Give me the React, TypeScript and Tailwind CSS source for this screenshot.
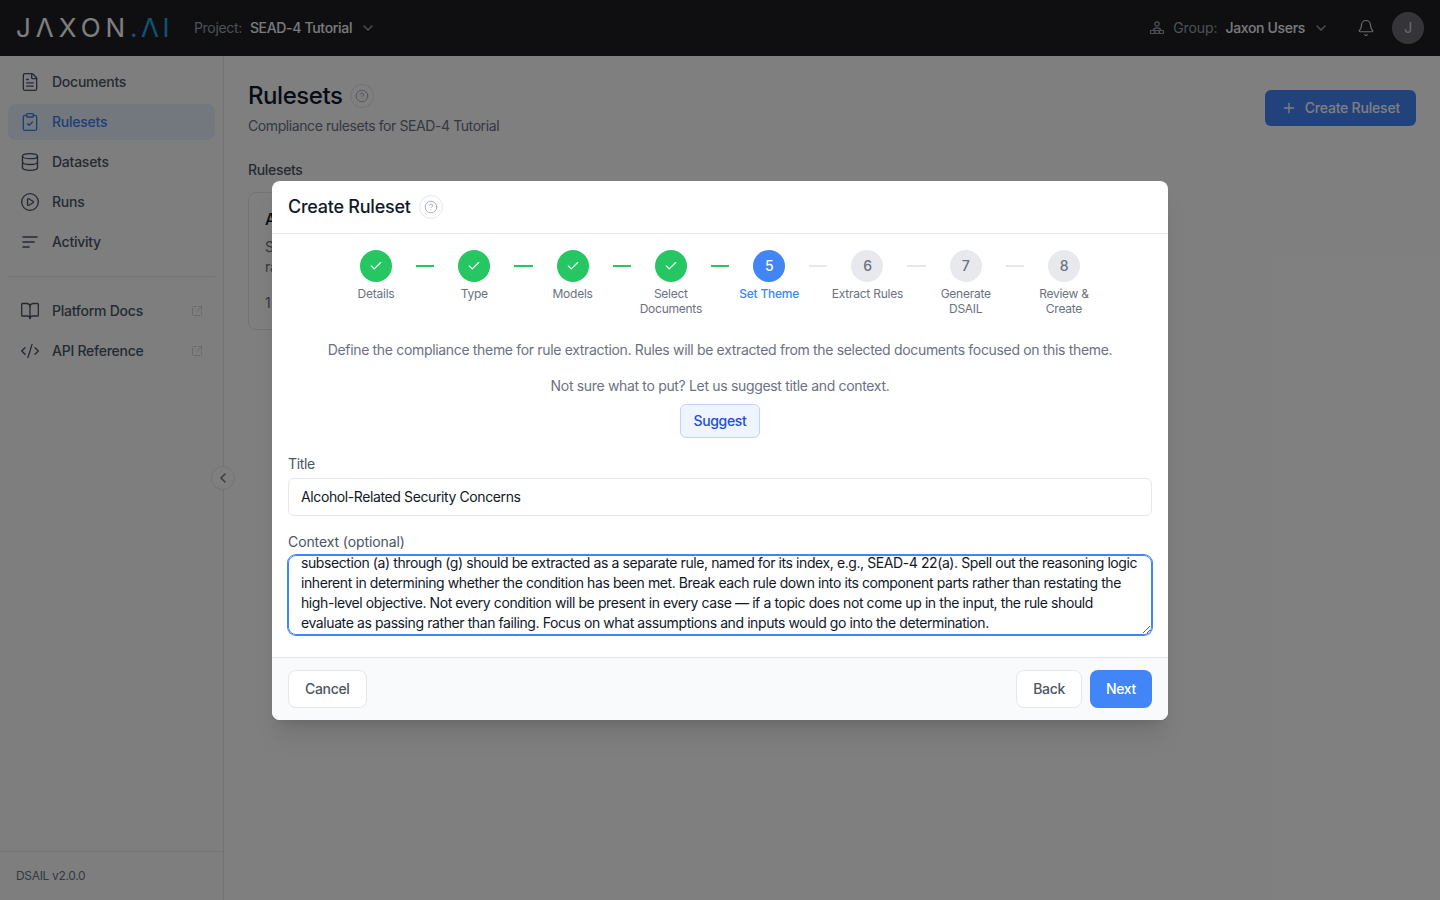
import { useEffect, useRef } from "react";
import {
  Bell,
  BookOpen,
  Check,
  ChevronDown,
  ChevronLeft,
  CircleHelp,
  CirclePlay,
  ClipboardCheck,
  CodeXml,
  Database,
  FileText,
  Plus,
  SquareArrowOutUpRight,
} from "lucide-react";

const contextText =
  "Focus on Guideline G of SEAD-4, covering the conditions that could raise a security concern about alcohol consumption. Each\nsubsection (a) through (g) should be extracted as a separate rule, named for its index, e.g., SEAD-4 22(a). Spell out the reasoning logic inherent in determining whether the condition has been met. Break each rule down into its component parts rather than restating the high-level objective. Not every condition will be present in every case — if a topic does not come up in the input, the rule should evaluate as passing rather than failing. Focus on what assumptions and inputs would go into the determination.";

const steps = [
  { n: 1, label: "Details" },
  { n: 2, label: "Type" },
  { n: 3, label: "Models" },
  { n: 4, label: "Select Documents" },
  { n: 5, label: "Set Theme" },
  { n: 6, label: "Extract Rules" },
  { n: 7, label: "Generate DSAIL" },
  { n: 8, label: "Review & Create" },
];
const currentStep = 5;

function ActivityIcon() {
  return (
    <svg width="20" height="20" viewBox="0 0 20 20" fill="none" stroke="currentColor" strokeWidth="1.6" strokeLinecap="round">
      <path d="M3 5h14M3 10h11M3 15h6" />
    </svg>
  );
}

function GroupIcon() {
  return (
    <svg width="16" height="16" viewBox="0 0 16 16" fill="none" stroke="currentColor" strokeWidth="1.2">
      <circle cx="8" cy="4" r="2.2" />
      <path d="M4.5 10c0-1.4 1.5-2.2 3.5-2.2s3.5.8 3.5 2.2" />
      <rect x="1.5" y="10.5" width="4" height="3" rx="0.8" />
      <rect x="6" y="10.5" width="4" height="3" rx="0.8" />
      <rect x="10.5" y="10.5" width="4" height="3" rx="0.8" />
    </svg>
  );
}

function HelpBadge() {
  return (
    <span className="flex h-6 w-6 items-center justify-center rounded-full border border-gray-200 text-gray-400">
      <CircleHelp size={14} strokeWidth={1.4} />
    </span>
  );
}

function NavItem({ icon, label, active, external }: { icon: React.ReactNode; label: string; active?: boolean; external?: boolean }) {
  return (
    <div className={`flex h-9 items-center gap-3 rounded-lg px-3 text-sm font-medium tracking-[-0.25px] ${active ? "bg-[#e7f0ff] text-[#3f7de8]" : "text-gray-600"}`}>
      {icon}
      <span className="flex-1">{label}</span>
      {external && <SquareArrowOutUpRight size={12} className="text-gray-300" />}
    </div>
  );
}

function Stepper() {
  return (
    <div className="mx-auto flex w-[768px] items-start">
      {steps.map((s, i) => {
        const done = s.n < currentStep;
        const current = s.n === currentStep;
        return (
          <div key={s.n} className="contents">
            <div className="flex w-20 shrink-0 flex-col items-center">
              <div
                className={`flex h-8 w-8 items-center justify-center rounded-full text-sm font-medium ${
                  done ? "bg-[#26c762] text-white" : current ? "bg-[#4285f6] text-white" : "bg-[#e8e9ed] text-gray-500"
                }`}
              >
                {done ? <Check size={14} strokeWidth={2} /> : s.n}
              </div>
              <span className={`mt-1 text-center text-xs leading-[15px] tracking-[-0.25px] ${current ? "font-medium text-[#4285f6]" : "text-gray-500"}`}>{s.label}</span>
            </div>
            {i < steps.length - 1 && <div className={`mt-[15px] h-0.5 flex-1 ${done ? "bg-[#26c762]" : "bg-[#e5e7eb]"}`} />}
          </div>
        );
      })}
    </div>
  );
}

export default function App() {
  const contextRef = useRef<HTMLTextAreaElement>(null);

  useEffect(() => {
    // the reference shows the end of the context, scrolled
    const el = contextRef.current;
    if (el) el.scrollTop = el.scrollHeight - el.clientHeight - 7;
  }, []);

  return (
    <div className="relative flex h-[900px] flex-col overflow-hidden bg-white font-[Inter,sans-serif] tracking-[-0.33px]">
      <header className="flex h-14 shrink-0 items-center bg-[#1f1f24] pl-4 pr-4 text-white">
        <div className="flex w-[178px] items-baseline text-[26px] font-normal leading-none tracking-normal">
          <span className="tracking-[5px]">JΛXON</span>
          <span className="tracking-[3.5px] text-[#22a7e0]">.ΛI</span>
        </div>
        <span className="text-sm text-gray-400">Project:</span>
        <span className="ml-2 text-sm font-medium text-gray-100">SEAD-4 Tutorial</span>
        <ChevronDown size={16} className="ml-2 text-gray-400" />
        <div className="ml-auto flex items-center text-sm">
          <span className="text-gray-400">
            <GroupIcon />
          </span>
          <span className="ml-2 tracking-[-0.1px] text-gray-400">Group:</span>
          <span className="ml-2 font-medium text-gray-100">Jaxon Users</span>
          <ChevronDown size={16} className="ml-2 text-gray-400" />
          <Bell size={18} strokeWidth={1.6} className="ml-[28px] text-gray-300" />
          <span className="ml-[17px] flex h-8 w-8 items-center justify-center rounded-full bg-[#6b6b72] text-sm text-gray-300">J</span>
        </div>
      </header>

      <div className="flex min-h-0 flex-1">
        <aside className="relative flex w-56 shrink-0 flex-col border-r border-gray-200 bg-[#fdfdfd]">
          <nav className="flex flex-col gap-1 px-2 pt-2">
            <NavItem icon={<FileText size={20} strokeWidth={1.6} />} label="Documents" />
            <NavItem icon={<ClipboardCheck size={20} strokeWidth={1.6} />} label="Rulesets" active />
            <NavItem icon={<Database size={20} strokeWidth={1.6} />} label="Datasets" />
            <NavItem icon={<CirclePlay size={20} strokeWidth={1.6} />} label="Runs" />
            <NavItem icon={<ActivityIcon />} label="Activity" />
          </nav>
          <div className="mx-2 mt-4 border-t border-gray-200" />
          <div className="mt-4 flex flex-col gap-1 px-2">
            <NavItem icon={<BookOpen size={20} strokeWidth={1.6} />} label="Platform Docs" external />
            <NavItem icon={<CodeXml size={20} strokeWidth={1.6} />} label="API Reference" external />
          </div>
          <div className="mt-auto flex h-[49px] items-center border-t border-gray-200 px-4 text-xs text-gray-500">DSAIL v2.0.0</div>
          <span className="absolute -right-3 top-[410px] flex h-6 w-6 items-center justify-center rounded-full border border-gray-200 bg-white text-gray-500">
            <ChevronLeft size={16} strokeWidth={2.2} />
          </span>
        </aside>

        <main className="min-w-0 flex-1 px-6 pt-6">
          <div className="flex items-start justify-between">
            <div>
              <div className="flex items-center gap-2">
                <h1 className="text-2xl font-medium tracking-[-0.45px] text-gray-900">Rulesets</h1>
                <HelpBadge />
              </div>
              <p className="mt-1 text-sm tracking-[-0.41px] text-gray-500">Compliance rulesets for SEAD-4 Tutorial</p>
            </div>
            <button className="mt-2.5 flex h-9 items-center gap-2 rounded-md bg-[#4285f6] px-4 text-sm font-medium tracking-[-0.2px] text-white">
              <Plus size={16} />
              Create Ruleset
            </button>
          </div>
          <h2 className="mt-6 text-sm font-medium text-gray-600">Rulesets</h2>
          <div className="mt-3 h-[138px] w-[400px] rounded-lg border border-gray-200 px-4 pt-[14px]">
            <div className="text-base font-medium text-gray-900">A</div>
            <p className="mt-1.5 text-sm leading-[20px] text-gray-500">
              S
              <br />
              ra
            </p>
            <p className="mt-4 text-sm text-gray-500">1</p>
          </div>
        </main>
      </div>

      <div className="absolute inset-0 flex items-center justify-center bg-black/50 pt-px">
        <div className="w-[896px] overflow-hidden rounded-lg bg-white shadow-xl">
          <div className="flex h-[53px] items-center gap-2 border-b border-gray-200 px-4">
            <h2 className="text-lg font-medium tracking-[-0.25px] text-gray-900">Create Ruleset</h2>
            <HelpBadge />
          </div>

          <div className="px-4 pb-[22px] pt-4">
            <Stepper />
            <p className="mt-6 text-center text-sm text-gray-500">Define the compliance theme for rule extraction. Rules will be extracted from the selected documents focused on this theme.</p>
            <p className="mt-4 text-center text-sm text-gray-500">Not sure what to put? Let us suggest title and context.</p>
            <div className="mt-2 flex justify-center">
              <button className="h-[34px] rounded-md border border-[#bfd5fb] bg-[#eff5ff] px-3 text-sm font-medium text-[#1d4ed8]">Suggest</button>
            </div>

            <label className="mt-4 block text-sm text-gray-600">Title</label>
            <div className="mt-1 flex h-[38px] items-center rounded-md border border-gray-200 px-3 text-sm tracking-[-0.39px] text-gray-900">Alcohol-Related Security Concerns</div>

            <label className="mt-4 block text-sm tracking-[-0.1px] text-gray-600">Context (optional)</label>
            <textarea
              ref={contextRef}
              readOnly
              value={contextText}
              className="mt-[3px] block h-20 w-full resize-y rounded-lg border border-[#4285f6] px-3 py-2 text-sm leading-5 tracking-[-0.41px] text-gray-900 outline-none ring-1 ring-[#4285f6] [scrollbar-width:none]"
            />
          </div>

          <div className="flex h-[63px] items-center justify-between border-t border-gray-200 bg-[#f9fafb] px-4">
            <button className="h-[38px] rounded-lg border border-gray-200 bg-white px-4 text-sm font-medium text-gray-600">Cancel</button>
            <div className="flex items-center gap-2">
              <button className="h-[38px] rounded-lg border border-gray-200 bg-white px-4 text-sm font-medium text-gray-600">Back</button>
              <button className="h-[38px] rounded-lg bg-[#4285f6] px-4 text-sm font-medium text-white">Next</button>
            </div>
          </div>
        </div>
      </div>
    </div>
  );
}
